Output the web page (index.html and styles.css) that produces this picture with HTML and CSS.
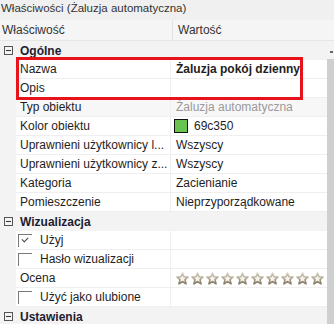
FILE: index.html
```html
<!DOCTYPE html>
<html lang="pl">

<head>
    <meta charset="UTF-8">
    <title>Właściwości</title>
    <link rel="stylesheet" href="styles.css">
</head>

<body>
    <div class="panel">
        <div class="title">Właściwości (Żaluzja automatyczna)</div>

        <div class="head">
            <div class="head-name">Właściwość</div>
            <div class="head-value">Wartość</div>
        </div>

        <div class="body">
            <div class="rows">
                <div class="cat"><span class="toggle"></span>Ogólne</div>
                <div class="row">
                    <div class="name">Nazwa</div>
                    <div class="value bold">Żaluzja pokój dzienny</div>
                </div>
                <div class="row">
                    <div class="name">Opis</div>
                    <div class="value"></div>
                </div>
                <div class="row readonly">
                    <div class="name">Typ obiektu</div>
                    <div class="value muted">Żaluzja automatyczna</div>
                </div>
                <div class="row">
                    <div class="name">Kolor obiektu</div>
                    <div class="value"><span class="swatch"></span>69c350</div>
                </div>
                <div class="row">
                    <div class="name">Uprawnieni użytkownicy l...</div>
                    <div class="value">Wszyscy</div>
                </div>
                <div class="row">
                    <div class="name">Uprawnieni użytkownicy z...</div>
                    <div class="value">Wszyscy</div>
                </div>
                <div class="row">
                    <div class="name">Kategoria</div>
                    <div class="value">Zacienianie</div>
                </div>
                <div class="row">
                    <div class="name">Pomieszczenie</div>
                    <div class="value">Nieprzyporządkowane</div>
                </div>

                <div class="cat"><span class="toggle"></span>Wizualizacja</div>
                <div class="row">
                    <div class="name"><span class="check checked"></span>Użyj</div>
                    <div class="value"></div>
                </div>
                <div class="row">
                    <div class="name"><span class="check"></span>Hasło wizualizacji</div>
                    <div class="value"></div>
                </div>
                <div class="row">
                    <div class="name">Ocena</div>
                    <div class="value stars" id="stars"></div>
                </div>
                <div class="row">
                    <div class="name"><span class="check"></span>Użyć jako ulubione</div>
                    <div class="value"></div>
                </div>

                <div class="cat"><span class="toggle"></span>Ustawienia</div>
            </div>

            <div class="scrollbar">
                <div class="scroll-top"><span class="arrow"></span></div>
                <div class="thumb"></div>
            </div>
        </div>

        <div class="highlight"></div>
    </div>

    <script>
        // rating stars, all empty
        const star = '<svg width="13" height="13" viewBox="0 0 13 13">' +
            '<defs><linearGradient id="sg" x1="0" y1="0" x2="0" y2="1">' +
            '<stop offset="0" stop-color="#d8d2c2"/><stop offset="1" stop-color="#857a62"/>' +
            '</linearGradient></defs>' +
            '<path d="M6.5 1 L8 4.8 L12 5 L9 7.6 L10 11.8 L6.5 9.5 L3 11.8 L4 7.6 L1 5 L5 4.8 Z" ' +
            'fill="#f6f4ee" stroke="url(#sg)" stroke-width="1.6" stroke-linejoin="round"/></svg>';
        document.getElementById('stars').innerHTML = star.repeat(10);
    </script>
</body>

</html>
```

FILE: styles.css
```css
body {
    margin: 0;
    font-family: "Liberation Sans", Arial, sans-serif;
    font-size: 12px;
    color: #1e1e1e;
}

.panel {
    position: relative;
    width: 334px;
    height: 324px;
    overflow: hidden;
    background-color: #f3f3f3;
}

.title {
    height: 20px;
    line-height: 17px;
    padding-left: 1px;
    background-color: #f0f0f0;
    color: #333;
    font-size: 11.5px;
}

.head {
    display: flex;
    height: 20px;
    line-height: 20px;
    background-color: #f5f5f5;
    border-bottom: 1px solid #e6e6e6;
    color: #333;
}

.head-name {
    width: 170px;
    padding-left: 2px;
    border-right: 1px solid #e3e3e3;
}

.head-value {
    padding-left: 5px;
}

.body {
    display: flex;
}

.rows {
    flex: 1;
}

.cat {
    display: flex;
    align-items: center;
    height: 19px;
    font-weight: bold;
    color: #1c1c30;
}

.toggle {
    position: relative;
    width: 9px;
    height: 9px;
    margin: 0 7px 0 4px;
    border: 1px solid #555;
    box-sizing: border-box;
}

.toggle::after {
    content: "";
    position: absolute;
    left: 1px;
    right: 1px;
    top: 3px;
    height: 1px;
    background-color: #333;
}

.row {
    display: grid;
    grid-template-columns: 155px 1fr;
    height: 19px;
    margin-left: 16px;
    background-color: #fff;
    border-bottom: 1px solid #efefef;
    box-sizing: border-box;
    line-height: 18px;
}

.name {
    display: flex;
    align-items: center;
    padding-left: 4px;
    border-right: 1px solid #efefef;
    white-space: nowrap;
    overflow: hidden;
}

.value {
    display: flex;
    align-items: center;
    padding-left: 5px;
    white-space: nowrap;
}

.bold {
    font-weight: bold;
}

.readonly .name,
.readonly .value {
    background-color: #f7f7f7;
}

.muted {
    color: #9a9a9a;
}

.swatch {
    width: 14px;
    height: 14px;
    margin: 0 6px 0 -2px;
    background-color: #69c350;
    border: 1px solid #111;
    box-sizing: border-box;
}

.check {
    position: relative;
    width: 14px;
    height: 13px;
    margin: 0 8px 0 -2px;
    border-top: 1px solid #7a7a7a;
    border-left: 1px solid #7a7a7a;
    box-sizing: border-box;
}

.check.checked::after {
    content: "";
    position: absolute;
    left: 3px;
    top: 2px;
    width: 5px;
    height: 3px;
    border-left: 1px solid #444;
    border-bottom: 1px solid #444;
    transform: rotate(-45deg);
}

.stars {
    gap: 2px;
    padding-left: 5px;
}

.stars svg {
    display: block;
}

.scrollbar {
    display: flex;
    flex-direction: column;
    width: 7px;
}

.scroll-top {
    position: relative;
    height: 18px;
}

.arrow {
    position: absolute;
    left: 3px;
    top: 10px;
    width: 3px;
    height: 2px;
    background-color: #666;
}

.thumb {
    flex: 1;
    background-color: #cfcfcf;
}

/* red annotation frame over Nazwa / Opis */
.highlight {
    position: absolute;
    left: 16px;
    top: 57px;
    width: 287px;
    height: 43px;
    border: 3px solid #e8121b;
    box-sizing: border-box;
}
```
